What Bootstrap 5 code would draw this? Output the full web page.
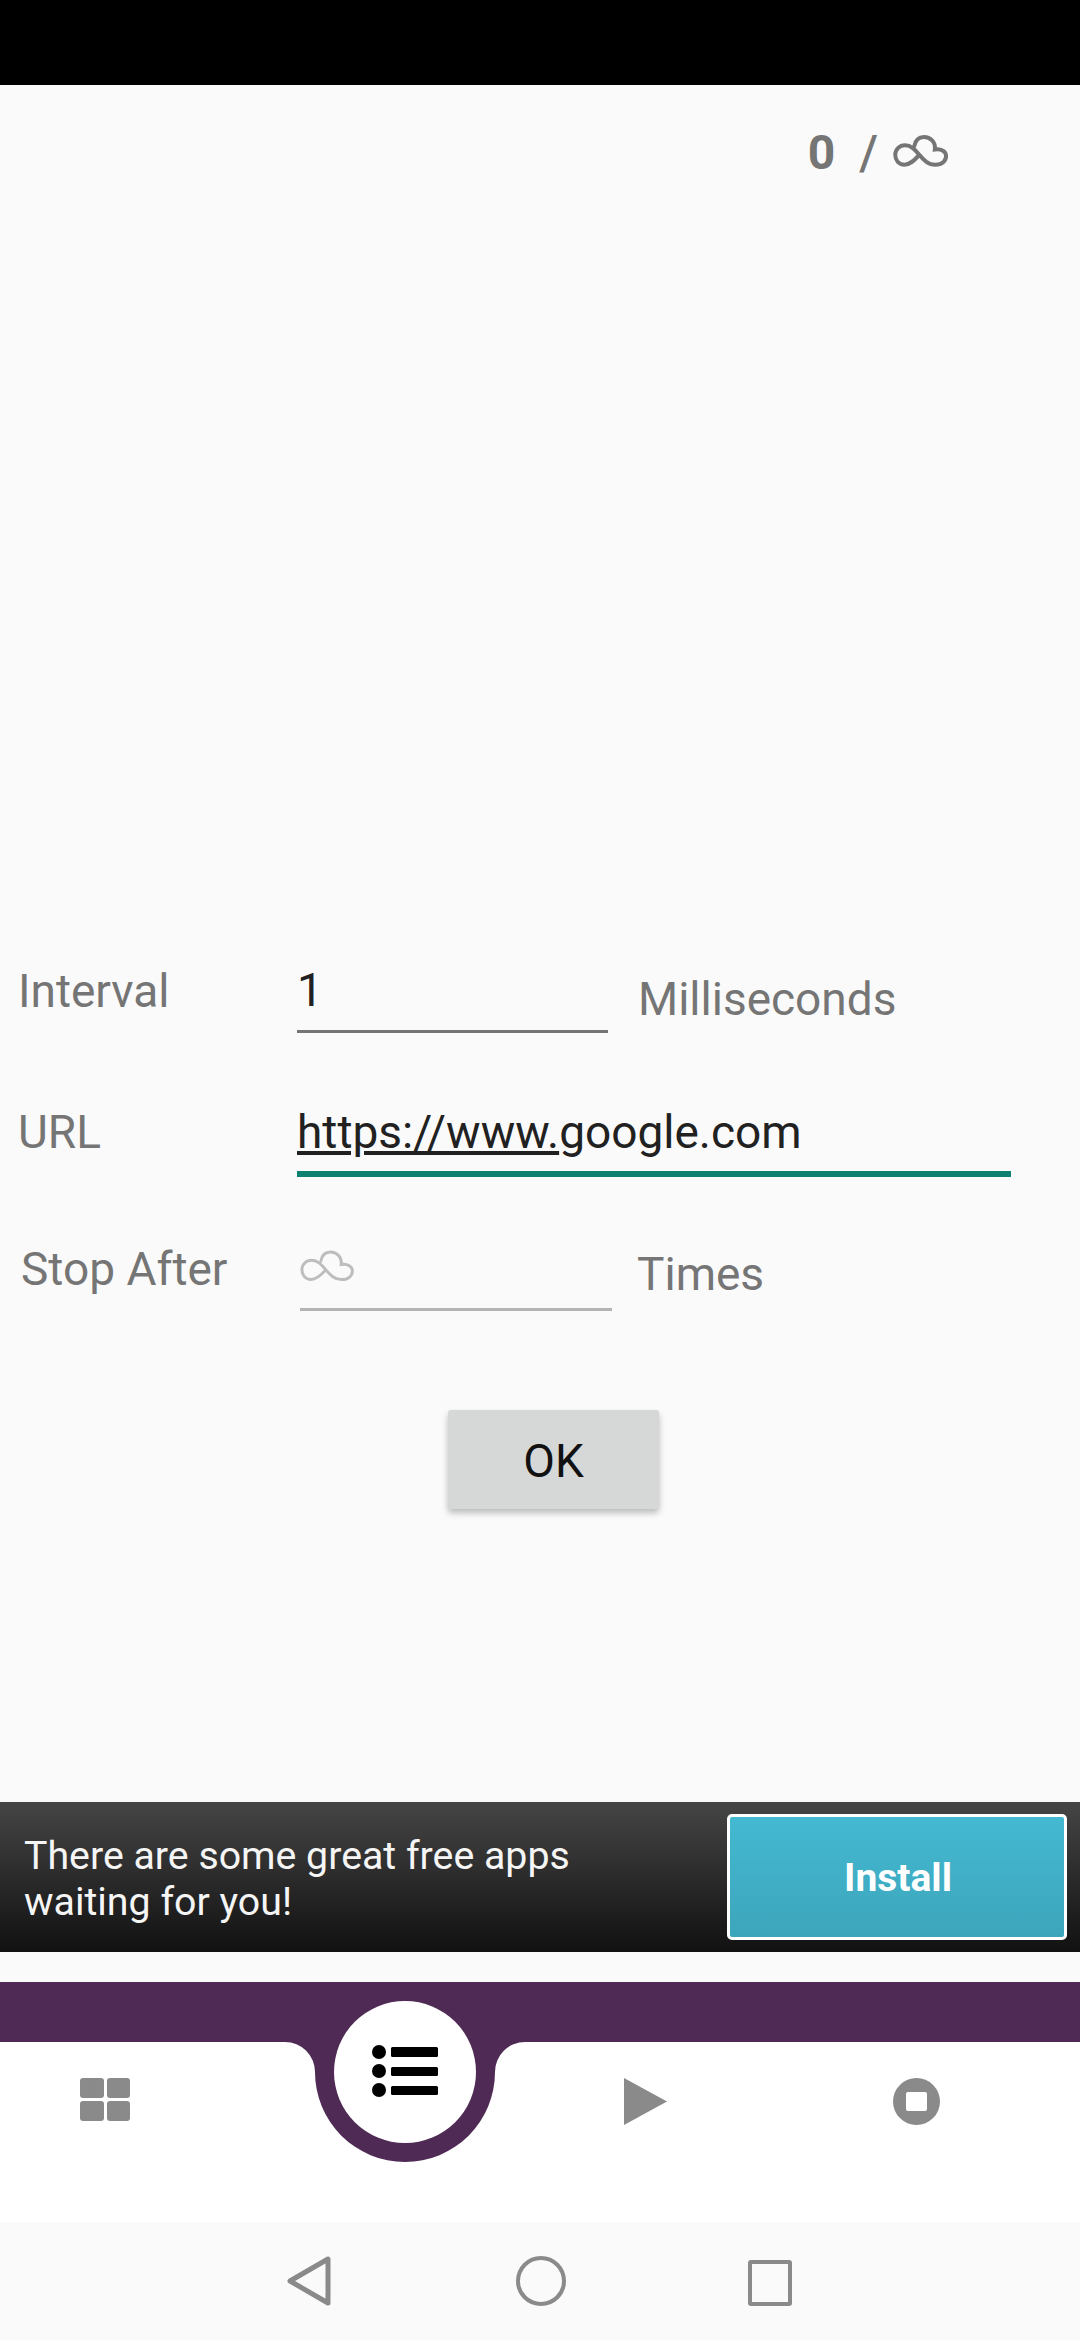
<!DOCTYPE html>
<html lang="en">
<head>
  <meta charset="UTF-8" />
  <title>Interval</title>
  <link href="https://cdn.jsdelivr.net/npm/bootstrap@5.3.3/dist/css/bootstrap.min.css" rel="stylesheet" />
  <style>
    body { width: 1080px; height: 2340px; overflow: hidden; background: #fafafa; font-family: Roboto, "Liberation Sans", sans-serif; color: #757575; }
    .status-strip { height: 85px; background: #000; }
    .main-area { height: 1717px; }

    .counter-row { padding: 40px 131px 0 0; font-size: 48px; line-height: 56px; font-weight: 700; }
    .counter-slash { margin-left: 24px; margin-right: 15px; font-weight: 500; }
    .inf-big { width: 56px; height: 33px; margin-top: 10px; stroke: #757575; stroke-width: 12; }
    .inf-small { width: 55px; height: 33px; margin-top: 7px; stroke: #bdbdbd; stroke-width: 9; }
    .inf-big, .inf-small { fill: none; stroke-linecap: round; }

    .form-area { padding-bottom: 293px; font-size: 46px; line-height: 53px; }
    .field-label { width: 297px; padding-left: 18px; flex-shrink: 0; }
    .field-label.shifted { width: 300px; padding-left: 21px; }
    .line-input { width: 311px; height: 68px; padding: 0 0 15px; background: transparent; border: 0; border-bottom: 3px solid #757575; border-radius: 0; font-size: 46px; line-height: 53px; color: #212121; box-shadow: none; align-self: flex-start; }
    .line-input:focus { background: transparent; border-color: #757575; box-shadow: none; color: #212121; }
    .url-input { width: 714px; height: 71px; border-bottom: 6px solid #0d8070; padding-bottom: 0; white-space: nowrap; }
    .hint-input { width: 312px; height: 68px; border-bottom: 3px solid #b3b3b3; }
    .unit-text { margin-top: 8px; margin-left: 30px; }
    .unit-text.times { margin-top: 5px; margin-left: 25px; }
    .row-url { margin-top: 73px; }
    .row-stop { margin-top: 66px; }
    .ok-wrap { margin-top: 99px; padding-left: 448px; }
    .ok-btn { width: 211px; height: 99px; padding: 4px 0 0; background: #d6d7d7; border: 0; border-radius: 3px; color: #111; font-size: 46px; box-shadow: 0 4px 6px rgba(0,0,0,.25); }
    .ok-btn:hover, .ok-btn:active { background: #d6d7d7; color: #111; }

    .ad-bar { height: 150px; background: linear-gradient(#454545, #111); color: #f5f5f5; padding-left: 24px; padding-right: 13px; font-size: 39.3px; line-height: 46px; }
    .ad-text { padding-top: 4px; }
    .ad-install { width: 340px; height: 126px; border: 3px solid #fff; border-radius: 5px; background: linear-gradient(#44b9d2, #3ca5bb); color: #fff; font-size: 39px; font-weight: 700; padding: 2px 0 0 2px; }
    .ad-install:hover, .ad-install:active { background: linear-gradient(#44b9d2, #3ca5bb); color: #fff; border-color: #fff; }

    .tab-wrap { margin-top: 30px; }
    .tab-band { height: 60px; background: #4f2a55; }
    .tab-row { height: 180px; background: #fff; padding: 36px 0 0 80px; }
    .tab-fab { left: 285px; top: 0; width: 240px; height: 180px; }
    .tab-play { margin-left: 494px; }
    .tab-stop { margin-left: 226px; }

    .sys-nav { height: 118px; background: #fafafa; padding: 34px 1px 0 0; }
    .sys-home { margin: 0 182px 0 185px; }
  </style>
</head>
<body>
  <svg width="0" height="0" class="d-block">
    <symbol id="inf-icon" viewBox="396 105 168 100">
      <path d="M474 166 C458 184 446 195 430 195 C412 195 402 181 402 165 C402 149 414 136 432 136 C450 136 462 150 474 164 C488 180 500 195 524 195 C544 195 556 183 556 169 C556 155 542 146 522 149 C525 126 508 111 489 111 C473 111 463 122 460 138" />
    </symbol>
  </svg>

  <div class="status-strip"></div>

  <main class="main-area d-flex flex-column">
    <div class="counter-row d-flex justify-content-end align-items-start">
      <span>0</span>
      <span class="counter-slash">/</span>
      <svg class="inf-big"><use href="#inf-icon" /></svg>
    </div>

    <form class="form-area mt-auto">
      <div class="d-flex">
        <label class="field-label" for="interval">Interval</label>
        <input id="interval" class="form-control line-input" type="text" value="1" />
        <span class="unit-text">Milliseconds</span>
      </div>
      <div class="d-flex row-url">
        <label class="field-label">URL</label>
        <div class="line-input url-input"><u>https://www.</u>google.com</div>
      </div>
      <div class="d-flex row-stop">
        <label class="field-label shifted">Stop After</label>
        <div class="line-input hint-input"><svg class="inf-small d-block"><use href="#inf-icon" /></svg></div>
        <span class="unit-text times">Times</span>
      </div>
      <div class="ok-wrap d-flex">
        <button type="button" class="btn ok-btn">OK</button>
      </div>
    </form>
  </main>

  <div class="ad-bar d-flex align-items-center justify-content-between">
    <div class="ad-text">There are some great free apps<br />waiting for you!</div>
    <button type="button" class="btn ad-install">Install</button>
  </div>

  <div class="tab-wrap position-relative">
    <div class="tab-band"></div>
    <div class="tab-row d-flex align-items-start">
      <svg width="50" height="43" viewBox="0 0 50 43" fill="#8a8a8a">
        <rect x="0" y="0" width="24" height="20" rx="3" />
        <rect x="27" y="0" width="23" height="20" rx="3" />
        <rect x="0" y="23" width="24" height="20" rx="3" />
        <rect x="27" y="23" width="23" height="20" rx="3" />
      </svg>
      <svg class="tab-play" width="43" height="47" viewBox="0 0 43 47" fill="#8a8a8a">
        <path d="M0 0 L43 23.5 L0 47 Z" />
      </svg>
      <svg class="tab-stop" width="47" height="47" viewBox="0 0 47 47">
        <circle cx="23.5" cy="23.5" r="23.5" fill="#8a8a8a" />
        <rect x="13" y="14" width="21" height="19" rx="2" fill="#fff" />
      </svg>
    </div>
    <svg class="tab-fab position-absolute" viewBox="0 0 240 180">
      <path d="M0 60 A30 30 0 0 1 30 90 A90 90 0 0 0 210 90 A30 30 0 0 1 240 60 Z" fill="#4f2a55" />
      <circle cx="120" cy="90" r="71" fill="#fff" />
      <circle cx="94" cy="70" r="7" fill="#000" />
      <circle cx="94" cy="89" r="7" fill="#000" />
      <circle cx="94" cy="108" r="7" fill="#000" />
      <rect x="106" y="65" width="47" height="10" rx="1.5" fill="#000" />
      <rect x="106" y="85" width="47" height="9" rx="1.5" fill="#000" />
      <rect x="106" y="104" width="47" height="9" rx="1.5" fill="#000" />
    </svg>
  </div>

  <nav class="sys-nav d-flex justify-content-center align-items-start">
    <svg width="44" height="50" viewBox="0 0 44 50" fill="none" stroke="#8a8a8a" stroke-width="5" stroke-linejoin="round">
      <path d="M41 3 L41 47 L3 25 Z" />
    </svg>
    <svg class="sys-home" width="50" height="50" viewBox="0 0 50 50" fill="none" stroke="#8a8a8a" stroke-width="4">
      <circle cx="25" cy="25" r="23" />
    </svg>
    <svg class="mt-1" width="44" height="46" viewBox="0 0 44 46" fill="none" stroke="#8a8a8a" stroke-width="4" stroke-linejoin="round">
      <rect x="2" y="2" width="40" height="42" rx="1" />
    </svg>
  </nav>

  <script src="https://cdn.jsdelivr.net/npm/bootstrap@5.3.3/dist/js/bootstrap.bundle.min.js"></script>
</body>
</html>
